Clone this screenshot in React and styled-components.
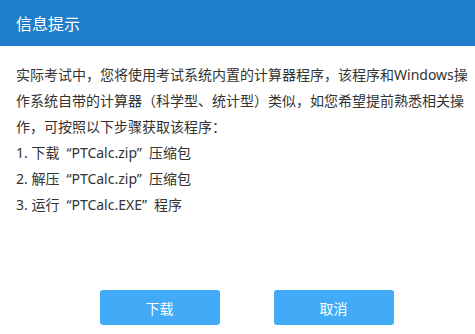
import React from "react";
import styled, { createGlobalStyle } from "styled-components";

const GlobalStyle = createGlobalStyle`
  html, body {
    margin: 0;
    padding: 0;
    background: #fff;
  }
  body {
    font-family: "Noto Sans", "Noto Sans CJK SC", sans-serif;
  }
`;

const Dialog = styled.div`
  width: 475px;
  height: 334px;
  display: flex;
  flex-direction: column;
  background: #fff;
`;

const Header = styled.div`
  height: 46px;
  background: #1e7ecb;
  color: #fff;
  font-size: 16px;
  display: flex;
  align-items: center;
  padding-left: 16px;
`;

const Body = styled.div`
  flex: 1;
  padding: 16px 6px 0 16px;
  color: #333;
  font-size: 14px;
  line-height: 26px;
`;

const Line = styled.p`
  margin: 0;
`;

const Quote = styled.span`
  margin: ${(p) => (p.$open ? "0 0 0 7px" : "0 7px 0 0")};
`;

const Footer = styled.div`
  display: flex;
  justify-content: center;
  gap: 54px;
  padding: 0 0 9px 18px;
`;

const Button = styled.button`
  width: 120px;
  height: 35px;
  border: none;
  border-radius: 3px;
  background: #42aaf7;
  color: #fff;
  font-family: inherit;
  font-size: 14px;
  cursor: pointer;
`;

const steps = [
  { no: "1.", verb: "下载", file: "PTCalc.zip", tail: "压缩包" },
  { no: "2.", verb: "解压", file: "PTCalc.zip", tail: "压缩包" },
  { no: "3.", verb: "运行", file: "PTCalc.EXE", tail: "程序" },
];

export default function App() {
  return (
    <>
      <GlobalStyle />
      <Dialog>
        <Header>信息提示</Header>
        <Body>
          <Line>
            实际考试中，您将使用考试系统内置的计算器程序，该程序和Windows操作系统自带的计算器（科学型、统计型）类似，如您希望提前熟悉相关操作，可按照以下步骤获取该程序：
          </Line>
          {steps.map((s) => (
            <Line key={s.no}>
              {s.no} {s.verb}
              <Quote $open>“</Quote>
              {s.file}
              <Quote>”</Quote>
              {s.tail}
            </Line>
          ))}
        </Body>
        <Footer>
          <Button>下载</Button>
          <Button>取消</Button>
        </Footer>
      </Dialog>
    </>
  );
}
